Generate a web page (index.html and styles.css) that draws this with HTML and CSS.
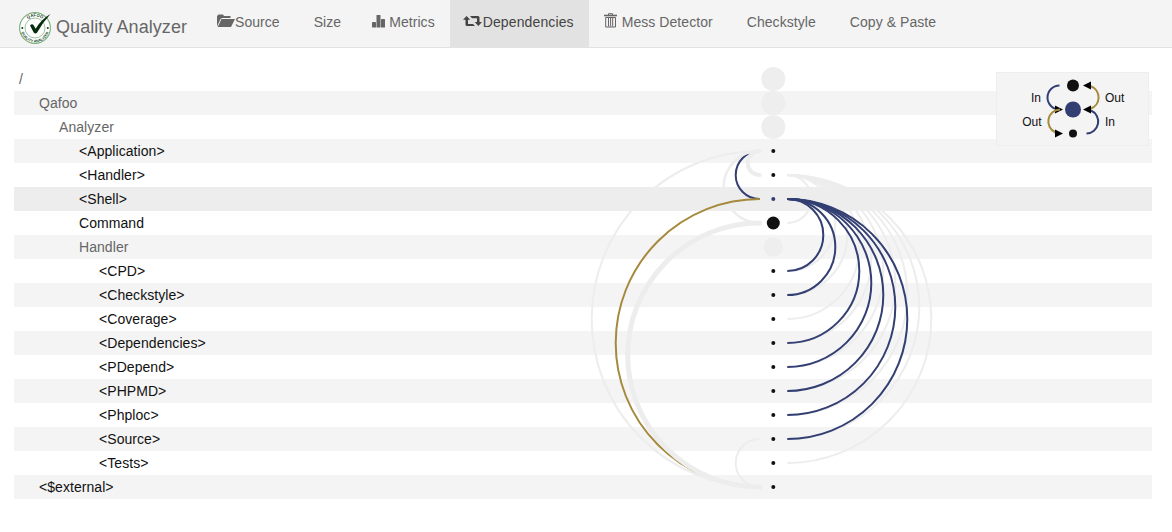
FILE: index.html
```html
<!DOCTYPE html>
<html lang="en">
<head>
<meta charset="utf-8">
<title>Quality Analyzer</title>
<link rel="stylesheet" href="styles.css">
</head>
<body>
<header class="navbar">
  <a class="brand">
    <svg class="logo" width="34" height="34" viewBox="0 0 34 34">
      <circle cx="17" cy="17" r="15.400" fill="#fff" stroke="#78ad7c" stroke-width="1.100"/>
      <circle cx="17" cy="17" r="10" fill="none" stroke="#9cc49f" stroke-width="1"/>
      <path id="top" d="M5.500 17a11.500 11.500 0 0 1 23 0" fill="none"/>
      <path id="bottom" d="M2.700 17a14.300 14.300 0 0 0 28.600 0" fill="none"/>
      <text class="seal"><textPath href="#top" startOffset="50%">QAFOO</textPath></text>
      <text class="seal seal-small"><textPath href="#bottom" startOffset="50%">QUALITY ANALYZER</textPath></text>
      <circle cx="4.300" cy="17" r="1" fill="#143e19"/><circle cx="29.800" cy="17" r="1" fill="#143e19"/>
      <path d="M12 14.500q2.200-2.400 3.800 0l1.800 3.200Q23 8.500 32.500 3Q25 11 19 21.800q-1.800 1.700-3.300-.3z" fill="#062c0b"/>
    </svg>
    <span>Quality Analyzer</span>
  </a>
  <nav class="menu">
    <a class="item"><svg width="18" height="14" viewBox="0 0 18 14" fill="currentColor"><path d="M0 12.500V2l1.500-1.500H6l1 1.500h6.500V4H5.200L3.500 5z"/><path d="M4.500 5H18l-4 8H.7z"/></svg><span>Source</span></a>
    <a class="item plain"><span>Size</span></a>
    <a class="item spaced"><svg width="14" height="14" viewBox="0 0 14 14" fill="currentColor"><rect x="1" y="8" width="4" height="5.500" rx=".6"/><rect x="5.500" y="1" width="4" height="12.500" rx=".6"/><rect x="10" y="5" width="4" height="8.500" rx=".6"/></svg><span>Metrics</span></a>
    <a class="item active"><svg width="19" height="14" viewBox="0 0 19 14" fill="currentColor"><path d="M3.600 2L7.200 5.800H5V10h5l2 2H4q-1.500 0-1.500-1.500V5.800H0z"/><path d="M7 2h8q1.500 0 1.500 1.500V8H19l-3.700 4L11.700 8H14V4.200H9z"/></svg><span>Dependencies</span></a>
    <a class="item spaced mess"><svg width="14" height="15" viewBox="0 0 14 15" fill="none" stroke="currentColor"><path d="M0 2.500h13" stroke-width="1.600"/><path d="M4.500 2V.7h4V2M1.700 4.500h9.800V14H1.700zM4.500 5v8.500M6.600 5v8.500M8.700 5v8.500"/></svg><span>Mess Detector</span></a>
    <a class="item plain"><span>Checkstyle</span></a>
    <a class="item plain"><span>Copy &amp; Paste</span></a>
  </nav>
</header>
<main class="chart">
  <div class="row d0 group">/</div>
  <div class="row d1 group">Qafoo</div>
  <div class="row d2 group">Analyzer</div>
  <div class="row d3">&lt;Application&gt;</div>
  <div class="row d3">&lt;Handler&gt;</div>
  <div class="row d3 selected">&lt;Shell&gt;</div>
  <div class="row d3">Command</div>
  <div class="row d3 group">Handler</div>
  <div class="row d4">&lt;CPD&gt;</div>
  <div class="row d4">&lt;Checkstyle&gt;</div>
  <div class="row d4">&lt;Coverage&gt;</div>
  <div class="row d4">&lt;Dependencies&gt;</div>
  <div class="row d4">&lt;PDepend&gt;</div>
  <div class="row d4">&lt;PHPMD&gt;</div>
  <div class="row d4">&lt;Phploc&gt;</div>
  <div class="row d4">&lt;Source&gt;</div>
  <div class="row d4">&lt;Tests&gt;</div>
  <div class="row d1">&lt;$external&gt;</div>
  <svg class="graph" width="400" height="440" viewBox="580 67 400 440">
    <g fill="#eee">
      <circle cx="773.300" cy="79" r="12"/><circle cx="773.300" cy="103" r="12"/><circle cx="773.300" cy="127" r="12"/><circle cx="773.300" cy="247" r="9.700"/>
    </g>
    <g fill="#111">
      <circle cx="773.300" cy="151" r="2"/><circle cx="773.300" cy="175" r="2"/><circle cx="773.300" cy="199" r="2" fill="#333f72"/><circle cx="773.300" cy="223" r="6.500"/>
      <circle cx="773.300" cy="271" r="2"/><circle cx="773.300" cy="295" r="2"/><circle cx="773.300" cy="319" r="2"/><circle cx="773.300" cy="343" r="2"/><circle cx="773.300" cy="367" r="2"/><circle cx="773.300" cy="391" r="2"/><circle cx="773.300" cy="415" r="2"/><circle cx="773.300" cy="439" r="2"/><circle cx="773.300" cy="463" r="2"/><circle cx="773.300" cy="487" r="2"/>
    </g>
    <g class="arc muted"><path d="M759.700 151a36 36 0 0 0 0 72" stroke-width="2.500"/></g>
    <g class="arc incoming"><path d="M759.700 151a24 24 0 0 0 0 48"/></g>
    <g class="arc outgoing"><path d="M759.700 199a144 144 0 0 0 0 288"/></g>
    <g class="arc muted">
      <path d="M759.700 151a12 12 0 0 0 0 24" stroke-width="4" stroke-linecap="round"/>
      <path d="M759.700 151a168 168 0 0 0 0 336"/>
      <path d="M759.700 223a132 132 0 0 0 0 264" stroke-width="5" stroke-linecap="round"/>
      <path d="M759.700 439a24 24 0 0 0 0 48"/>
      <path d="M759.700 151a36 36 0 0 0-29 14.700" stroke-width="2.500"/>
      <path d="M787.300 175a24 24 0 0 1 0 48"/><path d="M787.300 175a48 48 0 0 1 0 96"/><path d="M787.300 175a60 60 0 0 1 0 120"/><path d="M787.300 175a72 72 0 0 1 0 144"/><path d="M787.300 175a84 84 0 0 1 0 168"/><path d="M787.300 175a96 96 0 0 1 0 192"/><path d="M787.300 175a108 108 0 0 1 0 216"/><path d="M787.300 175a120 120 0 0 1 0 240"/><path d="M787.300 175a132 132 0 0 1 0 264"/><path d="M787.300 175a144 144 0 0 1 0 288"/>
    </g>
    <g class="arc incoming">
      <path d="M787.300 199a36 36 0 0 1 0 72"/><path d="M787.300 199a48 48 0 0 1 0 96"/><path d="M787.300 199a72 72 0 0 1 0 144"/><path d="M787.300 199a84 84 0 0 1 0 168"/><path d="M787.300 199a96 96 0 0 1 0 192"/><path d="M787.300 199a108 108 0 0 1 0 216"/><path d="M787.300 199a120 120 0 0 1 0 240"/>
    </g>
  </svg>
  <svg class="legend" width="154" height="76" viewBox="995 71 154 76">
    <rect x="996.500" y="72.500" width="152" height="73" fill="#f4f4f4" stroke="#eee"/>
    <circle cx="1073" cy="85.500" r="6" fill="#111"/><circle cx="1073" cy="109.500" r="8" fill="#333f72"/><circle cx="1073" cy="133.500" r="4" fill="#111"/>
    <g class="arc incoming"><path d="M1059.500 85.500a12 12 0 0 0 0 24"/><path d="M1086.500 133.500a12 12 0 0 0 4.500-23"/></g>
    <path d="M1055 105.500l8 4-8 4z"/>
    <g class="arc outgoing"><path d="M1060 109.500a12 12 0 0 0-4.500 23"/><path d="M1091 86.300a12 12 0 0 1-.5 22.500"/></g>
    <g fill="#000"><path d="M1055 129.500l8 4-8 4z"/><path d="M1091 81.500l-8 4 8 4z"/><path d="M1091 105.500l-8 4 8 4z"/></g>
    <g class="legend-text"><text x="1041" y="102" text-anchor="end">In</text><text x="1041.500" y="126" text-anchor="end">Out</text><text x="1105" y="102">Out</text><text x="1105" y="126">In</text></g>
  </svg>
</main>
</body>
</html>
```
FILE: styles.css
```css
body {
  margin: 0;
  background: #fff;
  font-family: "Liberation Sans", Arial, sans-serif;
  font-size: 14px;
  color: #111;
}
.navbar {
  display: flex;
  height: 47px;
  background: #f4f4f4;
  border-bottom: 1px solid #e2e2e2;
  color: #666;
}
.brand {
  display: flex;
  width: 184px;
  padding: 11px 0 0 18px;
  gap: 4px;
  font-size: 18px;
  line-height: 32px;
  letter-spacing: 0.06px;
  white-space: nowrap;
}
.logo { flex: none; }
.seal {
  font-size: 4.2px;
  font-weight: bold;
  fill: #143e19;
  text-anchor: middle;
  letter-spacing: 0;
}
.seal-small { font-size: 3.6px; }
.menu { display: flex; line-height: 20px; letter-spacing: 0.06px; }
.item {
  display: flex;
  padding: 12px 15px 15px;
  white-space: nowrap;
}
.item svg { flex: none; margin-top: 2px; }
.plain { padding-left: 19px; }
.spaced { gap: 4px; }
.mess svg { margin-top: 1px; }
.active {
  background: #e2e2e2;
  color: #444;
  padding: 12px 15px 16px 13px;
  gap: 1px;
  height: 20px;
  letter-spacing: 0.12px;
}
.chart {
  position: relative;
  margin: 19px 20px 0 14px;
}
.row {
  height: 24px;
  line-height: 24px;
  padding-left: 5px;
  letter-spacing: 0.06px;
}
.row:nth-child(even) { background: #f4f4f4; }
.row.selected { background: #ededed; }
.group { color: #666; }
.d1 { padding-left: 25px; }
.d2 { padding-left: 45px; }
.d3 { padding-left: 65px; }
.d4 { padding-left: 85px; }
.graph { position: absolute; left: 566px; top: 0; }
.legend { position: absolute; right: 3px; top: 4px; }
.arc { fill: none; stroke-width: 2; }
.muted { stroke: #ededed; }
.incoming { stroke: #333f72; }
.outgoing { stroke: #a68a3c; }
.legend-text { font-size: 12px; fill: #111; }
```
